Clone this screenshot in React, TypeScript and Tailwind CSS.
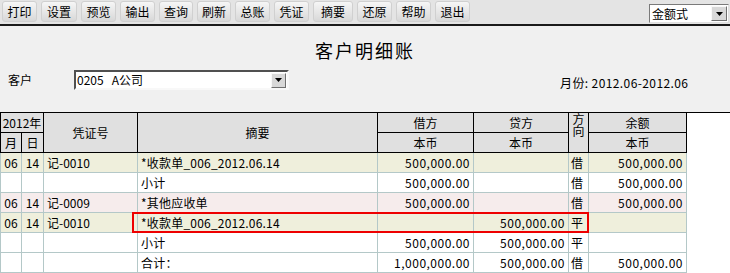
import React from "react";

const font = { fontFamily: '"Noto Sans CJK SC", "DejaVu Sans", sans-serif' };

const buttons = [
  { t: "打印", w: "w-[35px]" },
  { t: "设置", w: "w-[36px]" },
  { t: "预览", w: "w-[35px]" },
  { t: "输出", w: "w-[35px]" },
  { t: "查询", w: "w-[34px]" },
  { t: "刷新", w: "w-[34px]" },
  { t: "总账", w: "w-[35px]" },
  { t: "凭证", w: "w-[35px]" },
  { t: "摘要", w: "w-[40px]" },
  { t: "还原", w: "w-[35px]" },
  { t: "帮助", w: "w-[35px]" },
  { t: "退出", w: "w-[35px]" },
];

type Row = {
  m: string;
  d: string;
  v: string;
  s: string;
  dr: string;
  cr: string;
  dir: string;
  bal: string;
  bg: string;
};

const rows: Row[] = [
  { m: "06", d: "14", v: "记-0010", s: "*收款单_006_2012.06.14", dr: "500,000.00", cr: "", dir: "借", bal: "500,000.00", bg: "bg-[#efefdc]" },
  { m: "", d: "", v: "", s: "小计", dr: "500,000.00", cr: "", dir: "借", bal: "500,000.00", bg: "bg-white" },
  { m: "06", d: "14", v: "记-0009", s: "*其他应收单", dr: "500,000.00", cr: "", dir: "借", bal: "500,000.00", bg: "bg-[#f6ecec]" },
  { m: "06", d: "14", v: "记-0010", s: "*收款单_006_2012.06.14", dr: "", cr: "500,000.00", dir: "平", bal: "", bg: "bg-[#efefdc]" },
  { m: "", d: "", v: "", s: "小计", dr: "500,000.00", cr: "500,000.00", dir: "平", bal: "", bg: "bg-white" },
  { m: "", d: "", v: "", s: "合计：", dr: "1,000,000.00", cr: "500,000.00", dir: "借", bal: "500,000.00", bg: "bg-white" },
];

const hc = "border border-black bg-[#e0e0e0] text-center font-normal p-0";
const dc = "border border-[#b4c8c8] p-0 h-[20px]";

export default function App() {
  return (
    <div className="w-[730px] h-[273px] overflow-hidden bg-white text-[12px] text-black leading-none" style={font}>
      {/* toolbar */}
      <div className="h-[26px] bg-[#e4e4e4] border-b-2 border-[#1a1a1a] flex items-start justify-between">
        <div className="flex gap-[4px] pl-[2px] pt-[1px]">
          {buttons.map((b) => (
            <div
              key={b.t}
              className={`${b.w} h-[21px] flex items-center justify-center rounded-[3px] border border-[#d0d0d0] bg-gradient-to-b from-[#f6f6f6] to-[#d8d8d8] text-[12px]`}
            >
              {b.t}
            </div>
          ))}
        </div>
        <div className="mt-[4px] mr-[1px] w-[80px] h-[19px] bg-white border border-[#7a7a7a] border-r-[#e0e0e0] border-b-[#e0e0e0] flex items-center justify-between">
          <span className="pl-[2px] text-[12px]">金额式</span>
          <div className="w-[16px] h-[15px] mr-[1px] bg-[#d8d8d8] border border-[#f8f8f8] border-r-[#707070] border-b-[#707070] flex items-center justify-center">
            <svg width="7" height="4" viewBox="0 0 7 4"><path d="M0 0h7L3.5 4z" fill="#000" /></svg>
          </div>
        </div>
      </div>

      {/* header area */}
      <div className="bg-[#f0f0f0] h-[86px] flex flex-col">
        <div className="h-[44px] flex items-center justify-center pt-[4px]">
          <span className="text-[18px] tracking-[2px]">客户明细账</span>
        </div>
        <div className="flex items-center h-[24px] mt-[-2px]">
          <span className="ml-[8px] w-[66px]">客户</span>
          <div className="w-[215px] h-[20px] bg-white border-2 border-[#505050] border-r-[#f8f8f8] border-b-[#f8f8f8] flex items-center justify-between">
            <span className="pl-[1px] text-[12px] whitespace-pre">0205   A公司</span>
            <div className="w-[15px] h-[15px] mr-[1px] bg-[#d8d8d8] border border-[#f8f8f8] border-r-[#707070] border-b-[#707070] flex items-center justify-center">
              <svg width="7" height="4" viewBox="0 0 7 4"><path d="M0 0h7L3.5 4z" fill="#000" /></svg>
            </div>
          </div>
          <span className="ml-[271px] mt-[6px] whitespace-pre tracking-[0.4px]">月份: 2012.06-2012.06</span>
        </div>
      </div>

      {/* table */}
      <div className="border-t border-black relative">
        <table className="border-collapse table-fixed w-[686px] -mt-px">
          <colgroup>
            <col className="w-[21px]" />
            <col className="w-[22px]" />
            <col className="w-[94px]" />
            <col className="w-[240px]" />
            <col className="w-[96px]" />
            <col className="w-[95px]" />
            <col className="w-[20px]" />
            <col className="w-[98px]" />
          </colgroup>
          <thead>
            <tr className="h-[20px]">
              <th colSpan={2} className={hc}>2012年</th>
              <th rowSpan={2} className={hc}>凭证号</th>
              <th rowSpan={2} className={hc}>摘要</th>
              <th className={hc}>借方</th>
              <th className={hc}>贷方</th>
              <th rowSpan={2} className={`${hc} align-top`}>
                <div className="leading-[12px] text-[12px]">方<br />向</div>
              </th>
              <th className={hc}>余额</th>
            </tr>
            <tr className="h-[20px]">
              <th className={hc}>月</th>
              <th className={hc}>日</th>
              <th className={hc}>本币</th>
              <th className={hc}>本币</th>
              <th className={hc}>本币</th>
            </tr>
          </thead>
          <tbody>
            {rows.map((r, i) => (
              <tr key={i} className={r.bg}>
                <td className={`${dc} text-center`}>{r.m}</td>
                <td className={`${dc} text-center`}>{r.d}</td>
                <td className={`${dc} pl-[3px]`}>{r.v}</td>
                <td className={`${dc} pl-[3px] tracking-[0.2px]`}>{r.s}</td>
                <td className={`${dc} text-right pr-[3px] tracking-[0.5px]`}>{r.dr}</td>
                <td className={`${dc} text-right pr-[3px] tracking-[0.5px]`}>{r.cr}</td>
                <td className={`${dc} pl-[2px]`}>{r.dir}</td>
                <td className={`${dc} text-right pr-[3px] tracking-[0.5px]`}>{r.bal}</td>
              </tr>
            ))}
          </tbody>
        </table>
        <div className="absolute left-[132px] top-[99px] w-[457px] h-[21px] border-2 border-[#ee0000] pointer-events-none" />
      </div>
    </div>
  );
}
